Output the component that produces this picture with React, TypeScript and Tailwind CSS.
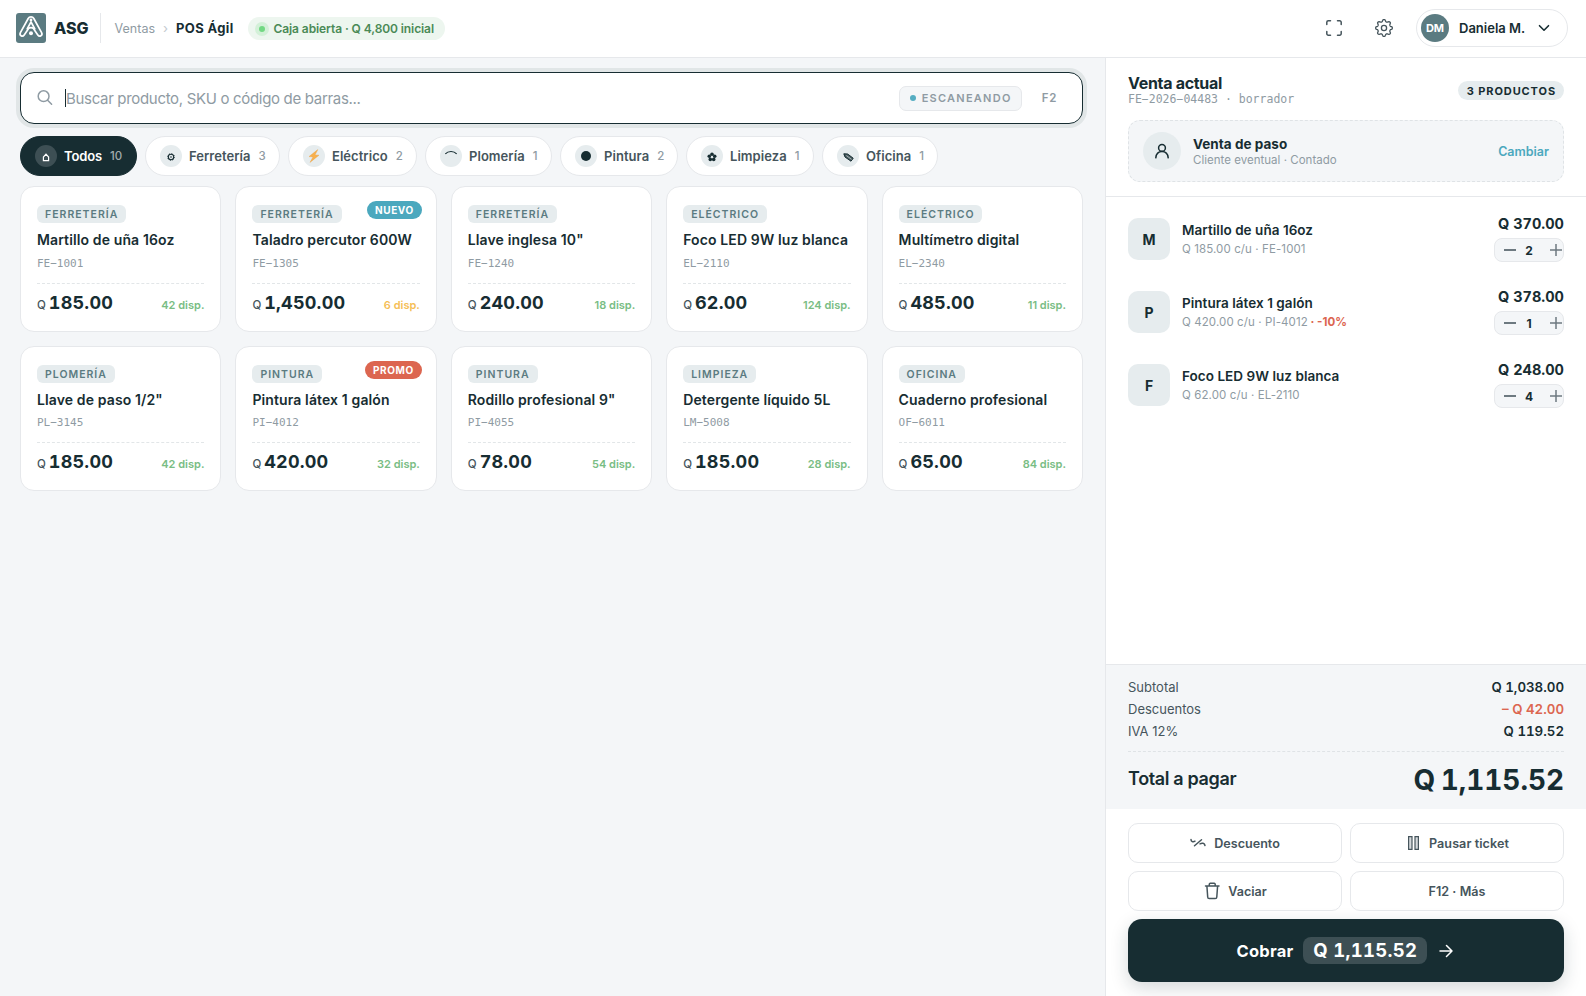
import React from "react";

const GREEN = "text-[#79bd84]";
const AMBER = "text-[#f5be56]";

type Product = {
  cat: string;
  name: string;
  sku: string;
  price: string;
  stock: string;
  stockColor: string;
  tag?: string;
  tagColor?: string;
};

const products: Product[] = [
  { cat: "FERRETERÍA", name: "Martillo de uña 16oz", sku: "FE−1001", price: "185.00", stock: "42 disp.", stockColor: GREEN },
  { cat: "FERRETERÍA", name: "Taladro percutor 600W", sku: "FE−1305", price: "1,450.00", stock: "6 disp.", stockColor: AMBER, tag: "NUEVO", tagColor: "bg-[#4ba8be]" },
  { cat: "FERRETERÍA", name: 'Llave inglesa 10"', sku: "FE−1240", price: "240.00", stock: "18 disp.", stockColor: GREEN },
  { cat: "ELÉCTRICO", name: "Foco LED 9W luz blanca", sku: "EL−2110", price: "62.00", stock: "124 disp.", stockColor: GREEN },
  { cat: "ELÉCTRICO", name: "Multímetro digital", sku: "EL−2340", price: "485.00", stock: "11 disp.", stockColor: GREEN },
  { cat: "PLOMERÍA", name: 'Llave de paso 1/2"', sku: "PL−3145", price: "185.00", stock: "42 disp.", stockColor: GREEN },
  { cat: "PINTURA", name: "Pintura látex 1 galón", sku: "PI−4012", price: "420.00", stock: "32 disp.", stockColor: GREEN, tag: "PROMO", tagColor: "bg-[#dc6650]" },
  { cat: "PINTURA", name: 'Rodillo profesional 9"', sku: "PI−4055", price: "78.00", stock: "54 disp.", stockColor: GREEN },
  { cat: "LIMPIEZA", name: "Detergente líquido 5L", sku: "LM−5008", price: "185.00", stock: "28 disp.", stockColor: GREEN },
  { cat: "OFICINA", name: "Cuaderno profesional", sku: "OF−6011", price: "65.00", stock: "84 disp.", stockColor: GREEN },
];

const Bolt = () => (
  <svg width="12" height="14" viewBox="0 0 12 14">
    <path d="M9.8 0.6 L1 7.6 L5 7.9 L2 13.4 L11 6.2 L7 5.9 Z" fill="#f8b04c" stroke="#e9a14a" strokeWidth="0.4" />
  </svg>
);
const Arc = () => (
  <svg width="12" height="12" viewBox="0 0 12 12" fill="none">
    <path d="M0.4 4 C3 0.7 9 0.7 11.6 4" stroke="#172d32" strokeWidth="1.1" />
  </svg>
);
const Dot = () => <span className="h-2.5 w-2.5 rounded-full bg-[#172d32]" />;
const House = () => (
  <svg className="mt-[3px]" width="8" height="9" viewBox="0 0 8 9" fill="none" stroke="#fff" strokeWidth="1.2">
    <path d="M4 1.2 L6.6 4 V7.6 H1.4 V4 Z" />
  </svg>
);
const GearGlyph = () => (
  <svg className="mt-0.5" width="8" height="8" viewBox="0 0 8 8" fill="none" stroke="#172d32">
    <circle cx="4" cy="4" r="2.7" strokeWidth="1.1" />
    <circle cx="4" cy="4" r="3.4" strokeWidth="0.9" strokeDasharray="1.1 1.57" />
    <circle cx="4" cy="4" r="0.8" fill="#172d32" stroke="none" />
  </svg>
);
const Flower = () => (
  <svg className="mt-0.5" width="10" height="10" viewBox="0 0 10 10" fill="#172d32">
    <circle cx="5" cy="2.2" r="1.8" />
    <circle cx="7.7" cy="4.2" r="1.8" />
    <circle cx="6.7" cy="7.4" r="1.8" />
    <circle cx="3.3" cy="7.4" r="1.8" />
    <circle cx="2.3" cy="4.2" r="1.8" />
    <circle cx="5" cy="5" r="1.1" fill="#e6ecee" />
  </svg>
);
const Pencil = () => (
  <svg className="mt-0.5" width="11" height="9" viewBox="0 0 11 9" fill="none" stroke="#172d32">
    <path d="M0.8 0.8 L4.6 1 L10.2 5.2 L8 8.2 L2 4 Z" strokeWidth="1" fill="#172d32" fillOpacity="0.75" strokeLinejoin="round" />
    <path d="M3.4 2.6 L8.6 6.4" stroke="#e6ecee" strokeWidth="0.6" />
  </svg>
);

const cats = [
  { label: "Todos", n: "10", icon: <House />, w: "w-[117px]" },
  { label: "Ferretería", n: "3", icon: <GearGlyph />, w: "w-[135px]" },
  { label: "Eléctrico", n: "2", icon: <Bolt />, w: "w-[129px]" },
  { label: "Plomería", n: "1", icon: <Arc />, w: "w-[127px]" },
  { label: "Pintura", n: "2", icon: <Dot />, w: "w-[118px]" },
  { label: "Limpieza", n: "1", icon: <Flower />, w: "w-[128px]" },
  { label: "Oficina", n: "1", icon: <Pencil />, w: "w-[116px]" },
];

const lines = [
  { l: "M", name: "Martillo de uña 16oz", d: "Q 185.00 c/u · FE-1001", total: "Q 370.00", q: "2" },
  { l: "P", name: "Pintura látex 1 galón", d: "Q 420.00 c/u · PI-4012", off: "· -10%", total: "Q 378.00", q: "1" },
  { l: "F", name: "Foco LED 9W luz blanca", d: "Q 62.00 c/u · EL-2110", total: "Q 248.00", q: "4" },
];

function Logo() {
  return (
    <svg width="30" height="30" viewBox="0 0 30 30" className="shrink-0">
      <rect width="30" height="30" rx="3" fill="#5b7b81" />
      <g fill="none" stroke="#fff" strokeWidth="1.7" strokeLinecap="round" strokeLinejoin="round">
        <path d="M15 3.8 C13.6 3.8 12.8 4.4 12.2 5.5 L4.4 19.6 C3 22.4 6.4 24.6 8.2 22 L12.6 15.6 C13.6 14.2 16.4 14.2 17.4 15.6 L21.8 22 C23.6 24.6 27 22.4 25.6 19.6 L17.8 5.5 C17.2 4.4 16.4 3.8 15 3.8 Z" />
        <path d="M15 9 L11.2 15.8 M15 9 L18.8 15.8" />
      </g>
      <circle cx="15" cy="7" r="1.4" fill="#fff" />
      <circle cx="15" cy="20.2" r="2" fill="#fff" />
    </svg>
  );
}

// Eight rounded teeth: radius swings between the valley and the tip around the wheel.
const gearOutline =
  Array.from({ length: 96 }, (_, i) => {
    const a = (i / 96) * Math.PI * 2;
    const wave = Math.tanh(1.8 * Math.cos(8 * a)) / Math.tanh(1.8);
    const r = 7.4 + 0.95 * wave;
    return `${i ? "L" : "M"}${(10 + r * Math.sin(a)).toFixed(2)} ${(10 - r * Math.cos(a)).toFixed(2)}`;
  }).join(" ") + " Z";

function Header() {
  return (
    <header className="flex h-[58px] shrink-0 items-center border-b border-[#e6e8eb] bg-white pl-4 pr-[18px] pb-px">
      <Logo />
      <span className="ml-2 text-base font-extrabold">ASG</span>
      <span className="ml-[11px] h-[30px] w-px bg-[#e6e8eb]" />
      <span className="ml-[14px] pt-0.5 text-[12.5px] text-[#8f9ba3]">Ventas</span>
      <span className="ml-2 pt-0.5 text-[13px] text-[#c3cacf]">›</span>
      <span className="ml-2 pt-0.5 text-[13px] font-bold tracking-[0.35px]">POS Ágil</span>
      <span className="ml-[14px] mt-px flex h-[23px] items-center rounded-full bg-[#edf6ef] pl-[7px] pr-[11px]">
        <span className="flex h-[14px] w-[14px] items-center justify-center rounded-full bg-[#d3f0d8]">
          <span className="h-1.5 w-1.5 rounded-full bg-[#72d883]" />
        </span>
        <span className="ml-[5px] pt-px text-xs font-semibold tracking-[-0.09px] text-[#4a8a56]">Caja abierta · Q 4,800 inicial</span>
      </span>
      <span className="flex-1" />
      <svg width="18" height="18" viewBox="0 0 18 18" fill="none" stroke="#46555c" strokeWidth="1.5" strokeLinecap="round" strokeLinejoin="round">
        <path d="M1.8 5.5 V3.3 A1.5 1.5 0 0 1 3.3 1.8 H5.5 M12.5 1.8 H14.7 A1.5 1.5 0 0 1 16.2 3.3 V5.5 M16.2 12.5 V14.7 A1.5 1.5 0 0 1 14.7 16.2 H12.5 M5.5 16.2 H3.3 A1.5 1.5 0 0 1 1.8 14.7 V12.5" />
      </svg>
      <svg className="ml-[31px]" width="20" height="20" viewBox="0 0 20 20" fill="none" stroke="#46555c" strokeWidth="1.3" strokeLinejoin="round">
        <path d={gearOutline} />
        <circle cx="10" cy="10" r="2.6" />
      </svg>
      <span className="ml-[22px] flex h-[38px] w-[152px] items-center rounded-full border border-[#e6e8eb] pl-1">
        <span className="flex h-7 w-7 items-center justify-center rounded-full bg-[#5b7b81] pt-px text-[11px] font-bold text-white">DM</span>
        <span className="ml-[10px] pt-px text-[13px] font-semibold">Daniela M.</span>
        <svg className="ml-[13px]" width="12" height="8" viewBox="0 0 12 8" fill="none" stroke="#172d32" strokeWidth="1.6" strokeLinecap="round" strokeLinejoin="round">
          <path d="M1.5 1.7 L6 6.2 L10.5 1.7" />
        </svg>
      </span>
    </header>
  );
}

function Card({ p }: { p: Product }) {
  return (
    <div className="relative flex h-[145.5px] flex-col rounded-[14px] border border-[#e6e8eb] bg-white px-4 pt-[18px]">
      {p.tag && (
        <span className={`absolute right-[14px] top-[14px] flex h-[18px] items-center rounded-full px-2 pt-px text-[10px] font-bold tracking-[0.6px] text-white ${p.tagColor}`}>
          {p.tag}
        </span>
      )}
      <span className="flex h-[18px] items-center self-start rounded-[6px] bg-[#e6ecee] px-2 pt-0.5 text-[10.5px] font-semibold tracking-[1px] text-[#5b7b81]">
        {p.cat}
      </span>
      <span className="mt-2 whitespace-nowrap text-sm font-semibold leading-[18px] tracking-[0.12px]">{p.name}</span>
      <span className="mt-[7.6px] font-['DejaVu_Sans_Mono',monospace] text-[11px] leading-[13px] text-[#8f9ba3]">{p.sku}</span>
      <div className="mt-[13px] flex items-baseline border-t border-dashed border-[#e2e6e8] pt-[7px]">
        <span className="text-[11.5px] font-medium text-[#46555c]">Q</span>
        <span className="ml-[3px] text-lg font-bold leading-[24px] tracking-[0.2px] tabular-nums">{p.price}</span>
        <span className={`ml-auto text-[11px] font-semibold ${p.stockColor}`}>{p.stock}</span>
      </div>
    </div>
  );
}

function Main() {
  return (
    <main className="flex flex-1 flex-col bg-[#f4f6f8] pl-5 pr-[22px] pt-[14px]">
      <div className="flex h-[52px] items-center rounded-[14px] border border-[#172d32] bg-white px-4 shadow-[0_0_0_4px_#e1e6e7]">
        <svg width="16" height="16" viewBox="0 0 16 16" fill="none" stroke="#8f9ba3" strokeWidth="1.5" strokeLinecap="round">
          <circle cx="6.6" cy="6.2" r="5.4" />
          <path d="M10.6 10.2 L14.6 14.2" />
        </svg>
        <span className="ml-3 h-[18px] w-px bg-[#172d32]" />
        <span className="pt-0.5 text-[15px] tracking-[-0.32px] text-[#8f9ba3]">Buscar producto, SKU o código de barras...</span>
        <span className="ml-auto flex h-[25px] w-[123px] items-center rounded-[7px] border border-[#e6e8eb] bg-[#f4f6f8] pl-[10px]">
          <span className="h-1.5 w-1.5 rounded-full bg-[#55adc2]" />
          <span className="ml-[6px] pt-px text-[11px] font-semibold tracking-[1.25px] text-[#8f9ba3]">ESCANEANDO</span>
        </span>
        <span className="ml-5 mr-[9px] pt-0.5 text-[11.5px] font-semibold tracking-[0.7px] text-[#8f9ba3]">F2</span>
      </div>
      <div className="mt-3 flex gap-2">
        {cats.map((c, i) => (
          <div
            key={c.label}
            className={`flex h-10 items-center rounded-full border pl-[14px] text-[13px] font-semibold ${c.w} ${
              i === 0 ? "border-[#172d32] bg-[#172d32] text-white" : "border-[#e6e8eb] bg-white text-[#46555c]"
            }`}
          >
            <span className={`flex h-[22px] w-[22px] items-center justify-center rounded-full ${i === 0 ? "bg-[#3d4f54]" : "bg-[#e6ecee]"}`}>{c.icon}</span>
            <span className={`ml-[7px] pt-0.5 ${i === 0 ? "tracking-[-0.15px]" : "tracking-[0.05px]"}`}>{c.label}</span>
            <span className={`ml-2 pt-0.5 text-[11.5px] font-medium ${i === 0 ? "text-[#a2abad]" : "text-[#8f9ba3]"}`}>{c.n}</span>
          </div>
        ))}
      </div>
      <div className="mt-[10px] grid grid-cols-5 gap-[14px]">
        {products.map((p) => (
          <Card key={p.name} p={p} />
        ))}
      </div>
    </main>
  );
}

function Ticket() {
  return (
    <aside className="flex w-[481px] shrink-0 flex-col border-l border-[#e6e8eb] bg-white">
      <div className="border-b border-[#e6e8eb] px-[22px] pb-[14px] pt-4">
        <div className="flex h-[46px] items-start justify-between">
          <div className="flex flex-col">
            <span className="text-base font-bold leading-[19px] tracking-[-0.3px]">Venta actual</span>
            <span className="font-['DejaVu_Sans_Mono',monospace] text-[11.5px] leading-[13px] text-[#8f9ba3]">FE−2026−04483 · borrador</span>
          </div>
          <span className="mt-[7px] flex h-[19px] items-center rounded-full bg-[#e6ecee] pl-[9px] pr-[8px] pt-px text-[11px] font-bold tracking-[0.9px]">3 PRODUCTOS</span>
        </div>
        <div className="flex h-[62px] items-center rounded-xl border border-dashed border-[#dfe3e6] bg-[#f4f6f8] px-[14px]">
          <span className="flex h-[38px] w-[38px] items-center justify-center rounded-full bg-[#e6ecee]">
            <svg width="16" height="16" viewBox="0 0 16 16" fill="none" stroke="#172d32" strokeWidth="1.5" strokeLinecap="round">
              <circle cx="8" cy="4.9" r="3.4" />
              <path d="M1.8 14.8 C2.2 11.2 4.5 8.6 8 8.6 C11.5 8.6 13.8 11.2 14.2 14.8" />
            </svg>
          </span>
          <div className="ml-3 flex flex-col pt-px">
            <span className="text-[13.5px] font-bold leading-4 tracking-[0.03px]">Venta de paso</span>
            <span className="text-[11.5px] leading-[16px] tracking-[0.02px] text-[#8f9ba3]">Cliente eventual · Contado</span>
          </div>
          <span className="ml-auto pt-0.5 text-[12.5px] font-semibold text-[#4ba8be]">Cambiar</span>
        </div>
      </div>
      <div className="flex flex-1 flex-col px-[22px] pt-[17px]">
        {lines.map((x) => (
          <div key={x.l} className="flex h-[73px] items-start">
            <span className="mt-1 flex h-[42px] w-[42px] items-center justify-center rounded-[10px] bg-[#e6ecee] pt-px text-sm font-bold">{x.l}</span>
            <div className="ml-3 mt-[7px] flex flex-col">
              <span className="text-[13.5px] font-semibold leading-[18px] tracking-[0.04px]">{x.name}</span>
              <span className="mt-[3px] text-[11.5px] leading-[14px] tracking-[0.1px] text-[#8f9ba3]">
                {x.d}
                {x.off && <span className="font-bold tracking-normal text-[#dc6650]"> {x.off}</span>}
              </span>
            </div>
            <div className="ml-auto flex flex-col items-end">
              <span className="text-[14.5px] font-bold leading-5 tabular-nums">{x.total}</span>
              <span className="mt-1 flex h-6 w-[70px] items-center rounded-[8px] border border-[#e6e8eb] bg-[#f4f6f8] pl-[9px]">
                <span className="h-[1.5px] w-3 bg-[#6d7980]" />
                <span className="w-[26px] pt-0.5 text-center text-xs font-bold">{x.q}</span>
                <svg className="ml-2" width="12" height="12" viewBox="0 0 12 12" stroke="#6d7980" strokeWidth="1.5">
                  <path d="M0 6 H12 M6 0 V12" />
                </svg>
              </span>
            </div>
          </div>
        ))}
      </div>
      <div className="flex h-[145px] flex-col border-t border-[#e6e8eb] bg-[#f4f6f8] px-[22px] pt-3 text-[13px]">
        <div className="flex h-[22px] items-center justify-between">
          <span className="text-[#46555c]">Subtotal</span>
          <span className="text-[13.3px] font-semibold tabular-nums">Q 1,038.00</span>
        </div>
        <div className="flex h-[22px] items-center justify-between">
          <span className="text-[#46555c]">Descuentos</span>
          <span className="text-[13.3px] font-semibold tabular-nums text-[#dc6650]">– Q 42.00</span>
        </div>
        <div className="flex h-[22px] items-center justify-between">
          <span className="text-[#46555c]">IVA 12%</span>
          <span className="text-[13.3px] font-semibold tabular-nums">Q 119.52</span>
        </div>
        <div className="mt-2 flex h-[57px] items-center justify-between border-t border-dashed border-[#dfe3e6]">
          <span className="pb-0.5 text-lg font-semibold tracking-[-0.35px]">Total a pagar</span>
          <span className="pb-px text-[28px] font-bold tabular-nums tracking-[-0.05px] [word-spacing:-1.8px]">Q 1,115.52</span>
        </div>
      </div>
      <div className="px-[22px] pb-[14px] pt-[14px]">
        <div className="grid grid-cols-2 gap-2 text-[12.6px] font-semibold text-[#46555c]">
          <div className="flex h-10 items-center justify-center rounded-[10px] border border-[#e6e8eb]">
            <svg width="16" height="16" viewBox="0 0 16 16" fill="none" stroke="#46555c" strokeWidth="1.5" strokeLinecap="round" strokeLinejoin="round">
              <path d="M1 4.5 C1 6.5 3 7.5 5 6.2 M4.5 10.8 L11.5 4.8 M10 8.8 C12 7.8 14.5 8 15 10.5" />
            </svg>
            <span className="ml-2 pt-0.5">Descuento</span>
          </div>
          <div className="flex h-10 items-center justify-center rounded-[10px] border border-[#e6e8eb]">
            <svg width="16" height="16" viewBox="0 0 16 16" fill="#d5d9dc" stroke="#46555c" strokeWidth="1.2">
              <path d="M3.6 1.6 H7 V14.4 H3.6 Z M10 1.6 H13.4 V14.4 H10 Z" />
            </svg>
            <span className="ml-2 pt-0.5 tracking-[0.07px]">Pausar ticket</span>
          </div>
          <div className="flex h-10 items-center justify-center rounded-[10px] border border-[#e6e8eb]">
            <svg className="ml-px" width="16" height="18" viewBox="0 0 16 18" fill="none" stroke="#46555c" strokeWidth="1.5" strokeLinecap="round" strokeLinejoin="round">
              <path d="M1.5 4 H15 M5.3 4 V2.5 A1 1 0 0 1 6.3 1.3 H10.2 A1 1 0 0 1 11.2 2.5 V4 M2.9 4 L3.7 15 A1.6 1.6 0 0 0 5.3 16.6 H11.2 A1.6 1.6 0 0 0 12.8 15 L13.6 4" />
            </svg>
            <span className="ml-2 pt-0.5">Vaciar</span>
          </div>
          <div className="flex h-10 items-center justify-center rounded-[10px] border border-[#e6e8eb] pt-0.5 tracking-[0.05px]">F12 · Más</div>
        </div>
        <div className="mt-2 flex h-[63px] items-center justify-center rounded-[14px] bg-[#172d32] pr-0.5 text-white shadow-[0_6px_18px_rgba(23,45,50,0.18)]">
          <span className="pt-0.5 text-[16.5px] font-bold tracking-[0.2px]">Cobrar</span>
          <span className="ml-[10px] flex h-[27px] items-center rounded-[8px] bg-[#3d4f54] px-[10px] pt-px text-[18.5px] font-bold tracking-[0.3px] tabular-nums">Q 1,115.52</span>
          <svg className="ml-3" width="14" height="14" viewBox="0 0 14 14" fill="none" stroke="#fff" strokeWidth="1.5" strokeLinecap="round" strokeLinejoin="round">
            <path d="M1 7 H13 M7.5 1.5 L13 7 L7.5 12.5" />
          </svg>
        </div>
      </div>
    </aside>
  );
}

export default function App() {
  return (
    <div className="flex h-[996px] w-[1586px] flex-col overflow-hidden bg-white font-['Inter',sans-serif] text-[#172d32]">
      <Header />
      <div className="flex min-h-0 flex-1">
        <Main />
        <Ticket />
      </div>
    </div>
  );
}
